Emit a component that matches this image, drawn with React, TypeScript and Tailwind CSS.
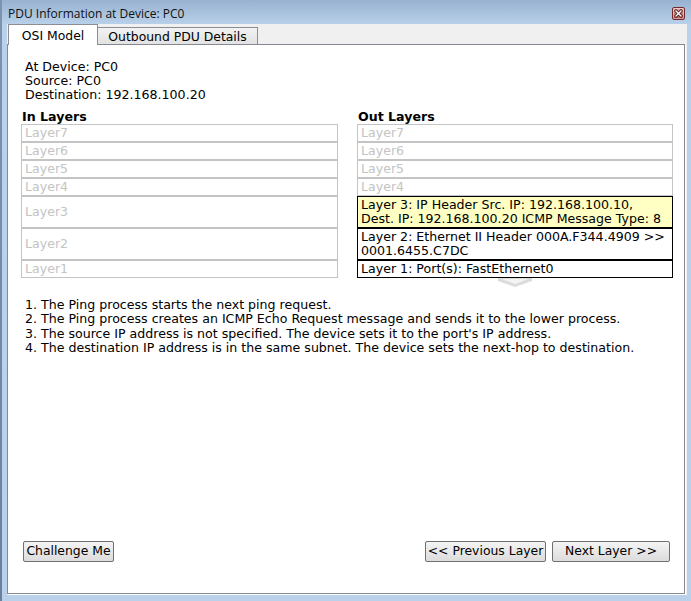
import React from "react";

const font = "font-['DejaVu_Sans',sans-serif]";

function CloseButton() {
  return (
    <div className="mt-[3px] w-[13px] h-[13px] rounded-[2px] border border-[#6e2a2a] bg-gradient-to-b from-[#e3a3a3] to-[#b94f4f] flex items-center justify-center shadow-[inset_0_0_0_1px_rgba(255,255,255,0.45)]">
      <svg width="9" height="9" viewBox="0 0 9 9">
        <path d="M2 2 L7 7 M7 2 L2 7" stroke="#3a1010" strokeWidth="3" strokeLinecap="square" />
        <path d="M2 2 L7 7 M7 2 L2 7" stroke="#ffffff" strokeWidth="1.4" strokeLinecap="square" />
      </svg>
    </div>
  );
}

type Row = { label: React.ReactNode; tall?: boolean; active?: boolean; yellow?: boolean };

function LayerBox({ row }: { row: Row }) {
  return (
    <div
      className={
        "flex items-center border pl-[3px] pr-[1px] text-[12.6px] leading-[14px] whitespace-nowrap overflow-hidden " +
        (row.tall ? "h-[32px] " : "h-[18px] ") +
        (row.active ? "border-black text-black " : "border-[#c4c4c4] text-[#c4c4c4] ") +
        (row.yellow ? "bg-[#ffffc4]" : "bg-white")
      }
    >
      <div>{row.label}</div>
    </div>
  );
}

function Btn({ children, w }: { children: React.ReactNode; w: string }) {
  return (
    <div
      className={
        "h-[21px] flex items-center justify-center rounded-[2px] border border-[#707070] bg-gradient-to-b from-[#f4f4f4] to-[#dcdcdc] text-[12.4px] text-black whitespace-nowrap " +
        w
      }
    >
      {children}
    </div>
  );
}

export default function App() {
  const inRows: Row[] = [
    { label: "Layer7" },
    { label: "Layer6" },
    { label: "Layer5" },
    { label: "Layer4" },
    { label: "Layer3", tall: true },
    { label: "Layer2", tall: true },
    { label: "Layer1" },
  ];
  const outRows: Row[] = [
    { label: "Layer7" },
    { label: "Layer6" },
    { label: "Layer5" },
    { label: "Layer4" },
    {
      label: (
        <>
          Layer 3: IP Header Src. IP: 192.168.100.10,
          <br />
          Dest. IP: 192.168.100.20 ICMP Message Type: 8
        </>
      ),
      tall: true,
      active: true,
      yellow: true,
    },
    {
      label: (
        <>
          Layer 2: Ethernet II Header 000A.F344.4909 &gt;&gt;
          <br />
          0001.6455.C7DC
        </>
      ),
      tall: true,
      active: true,
    },
    { label: "Layer 1: Port(s): FastEthernet0", active: true },
  ];

  return (
    <div className={"w-[691px] h-[601px] flex bg-[#b9d1ea] overflow-hidden text-black " + font}>
      <div className="w-[2px] h-full bg-gradient-to-b from-[#7d93ae] to-[#6a809c]" />
      <div className="flex-1 flex flex-col">
        {/* Title bar */}
        <div className="h-[24px] flex items-center justify-between pl-[6px] pr-[6px] bg-gradient-to-b from-[#97b2d0] to-[#b8d0e9]">
          <span className="pt-[3px] text-[12px] leading-[14px] font-['Open_Sans',sans-serif] text-[#101010]">
            PDU Information at Device: PC0
          </span>
          <CloseButton />
        </div>

        {/* Tab area */}
        <div className="ml-[5px] mr-[4px] h-[571px] bg-[#f0f0f0] flex flex-col">
          <div className="h-[20px] flex items-end relative z-10">
            <div className="ml-[1px] w-[90px] h-[21px] -mb-[1px] bg-white border border-b-0 border-[#8a8d93] flex items-center justify-center pt-[2px] text-[12.4px] leading-[14px]">
              OSI Model
            </div>
            <div className="w-[160px] h-[17px] bg-gradient-to-b from-[#f2f2f2] to-[#e2e2e2] border-t border-r border-[#8a8d93] flex items-center justify-center pt-[2px] text-[12.4px] leading-[14px]">
              Outbound PDU Details
            </div>
          </div>

          {/* Panel */}
          <div className="w-[678px] h-[550px] bg-white border border-[#858a92] shadow-[1px_1px_0_0_#ffffff] flex flex-col">
            <div className="pl-[17px] pt-[15px] text-[12.6px] leading-[14px]">
              <div>At Device: PC0</div>
              <div>Source: PC0</div>
              <div>Destination: 192.168.100.20</div>
            </div>

            <div className="mt-[8px] pl-[13px] flex gap-[19px]">
              <div className="w-[317px] flex flex-col">
                <div className="pl-[1px] text-[12.6px] leading-[14px] font-bold">In Layers</div>
                {inRows.map((r, i) => (
                  <LayerBox key={i} row={r} />
                ))}
              </div>
              <div className="w-[316px] flex flex-col">
                <div className="pl-[1px] text-[12.6px] leading-[14px] font-bold">Out Layers</div>
                {outRows.map((r, i) => (
                  <LayerBox key={i} row={r} />
                ))}
                <div className="flex justify-center h-[9px]">
                  <svg width="34" height="9" viewBox="0 0 34 9">
                    <polygon points="0,0 34,0 34,3 17,9 0,3" fill="#dcdcdc" />
                    <polygon points="4,1 30,1 17,6" fill="#f4f4f4" />
                  </svg>
                </div>
              </div>
            </div>

            <div className="mt-[11px] pl-[17px] text-[12.6px] leading-[14.3px]">
              <div>1. The Ping process starts the next ping request.</div>
              <div>2. The Ping process creates an ICMP Echo Request message and sends it to the lower process.</div>
              <div>3. The source IP address is not specified. The device sets it to the port's IP address.</div>
              <div>4. The destination IP address is in the same subnet. The device sets the next-hop to destination.</div>
            </div>

            <div className="flex-1" />

            <div className="flex items-center pl-[15px] pr-[14px] pb-[31px]">
              <Btn w="w-[91px]">Challenge Me</Btn>
              <div className="flex-1" />
              <Btn w="w-[121px]">&lt;&lt; Previous Layer</Btn>
              <div className="w-[6px]" />
              <Btn w="w-[118px]">Next Layer &gt;&gt;</Btn>
            </div>
          </div>
        </div>
      </div>
    </div>
  );
}
